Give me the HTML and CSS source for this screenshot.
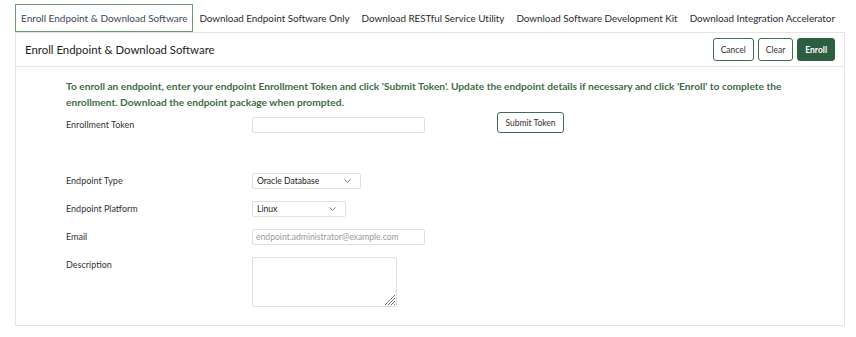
FILE: index.html
```html
<!DOCTYPE html>
<html>
<head>
<meta charset="utf-8">
<link rel="stylesheet" href="styles.css">
</head>
<body>
<nav class="tabs">
  <div class="tab active">Enroll Endpoint &amp; Download Software</div>
  <div class="tab">Download Endpoint Software Only</div>
  <div class="tab">Download RESTful Service Utility</div>
  <div class="tab">Download Software Development Kit</div>
  <div class="tab">Download Integration Accelerator</div>
</nav>
<section class="panel">
  <header class="panel-head">
    <h1 class="title">Enroll Endpoint &amp; Download Software</h1>
    <div class="actions">
      <button class="btn">Cancel</button>
      <button class="btn">Clear</button>
      <button class="btn primary">Enroll</button>
    </div>
  </header>
  <div class="panel-body">
    <p class="intro">To enroll an endpoint, enter your endpoint Enrollment Token and click 'Submit Token'. Update the endpoint details if necessary and click 'Enroll' to complete the enrollment. Download the endpoint package when prompted.</p>
    <div class="row token-row">
      <label class="label">Enrollment Token</label>
      <input class="field w-lg" type="text">
      <button class="btn submit">Submit Token</button>
    </div>
    <div class="rows">
      <div class="row">
        <label class="label">Endpoint Type</label>
        <div class="select w-type"><span>Oracle Database</span><svg class="chev" width="7" height="4" viewBox="0 0 7 4"><path d="M0.5 0.5 L3.5 3.3 L6.5 0.5" fill="none" stroke="#666" stroke-width="0.9"/></svg></div>
      </div>
      <div class="row">
        <label class="label">Endpoint Platform</label>
        <div class="select w-plat"><span>Linux</span><svg class="chev" width="7" height="4" viewBox="0 0 7 4"><path d="M0.5 0.5 L3.5 3.3 L6.5 0.5" fill="none" stroke="#666" stroke-width="0.9"/></svg></div>
      </div>
      <div class="row">
        <label class="label">Email</label>
        <input class="field w-lg" type="text" placeholder="endpoint.administrator@example.com">
      </div>
      <div class="row">
        <label class="label">Description</label>
        <div class="area-wrap">
          <textarea class="area"></textarea>
          <svg class="grip" width="12" height="12" viewBox="0 0 12 12"><path d="M11 1 L1 11 M11 4 L4 11 M11 7 L7 11 M11 10 L10 11" stroke="#777" stroke-width="1" fill="none"/></svg>
        </div>
      </div>
    </div>
  </div>
</section>
</body>
</html>
```
FILE: styles.css
```css
* { box-sizing: border-box; }
body {
  margin: 0;
  font-family: Lato, "Open Sans", sans-serif;
  color: #333;
  background: #fff;
}
.tabs {
  display: flex;
  margin: 4px 0 0 15px;
  height: 28px;
}
.tab {
  padding: 0 5px;
  border: 1px solid transparent;
  font-size: 10px;
  line-height: 26px;
  color: #2a2a2a;
  white-space: nowrap;
}
.tab + .tab { font-size: 9.9px; letter-spacing: -0.03px; }
.tab.active {
  border-color: #6e9c6e;
  color: #3a4656;
}
.panel {
  margin: 0 11px 0 15px;
  border: 1px solid #e4e4e4;
  height: 294px;
}
.panel-head {
  height: 34px;
  border-bottom: 1px solid #e6e6e6;
  display: flex;
  align-items: center;
  justify-content: space-between;
  padding: 0 9px;
}
.title {
  margin: 0;
  font-size: 11.4px;
  font-weight: normal;
  color: #222;
}
.actions { display: flex; gap: 4px; }
.btn {
  font-family: inherit;
  font-size: 8.5px;
  color: #333;
  background: #fff;
  border: 1px solid #3f6d50;
  border-radius: 3px;
  height: 23px;
  padding: 0 7px;
  cursor: pointer;
}
.btn.primary {
  background: #2d5e3f;
  border-color: #2d5e3f;
  color: #fff;
  font-weight: bold;
}
.panel-body {
  padding: 11px 0 0 50px;
}
.intro {
  margin: 0;
  width: 750px;
  font-size: 10.2px;
  line-height: 16px;
  font-weight: bold;
  color: #3d6c45;
}
.row {
  display: flex;
  align-items: flex-start;
}
.label {
  width: 186px;
  flex: none;
  font-size: 9px;
  line-height: 16px;
  color: #333;
}
.token-row { margin-top: 2px; }
.token-row .label { margin-top: 5px; }
.token-row .field { margin-top: 5px; }
.submit {
  margin-left: 72px;
  height: 21px;
  width: 67px;
  padding: 0;
}
.rows {
  margin-top: 40px;
  display: flex;
  flex-direction: column;
  gap: 12px;
}
.field, .select, .area {
  height: 16px;
  border: 1px solid #e2dfd6;
  border-radius: 2px;
  background: #fff;
  font-family: inherit;
  font-size: 8.6px;
  color: #222;
}
.field { padding: 0 3px; outline: none; }
.field::placeholder { color: #9a9a9a; }
.w-lg { width: 173px; }
.select {
  display: flex;
  align-items: center;
  justify-content: space-between;
  padding: 0 9px 0 4px;
}
.w-type { width: 109px; }
.w-plat { width: 94px; }
.area-wrap {
  position: relative;
  width: 145px;
  height: 50px;
}
.area {
  display: block;
  width: 145px;
  height: 50px;
  resize: none;
}
.grip {
  position: absolute;
  right: 1px;
  bottom: 1px;
}
```
